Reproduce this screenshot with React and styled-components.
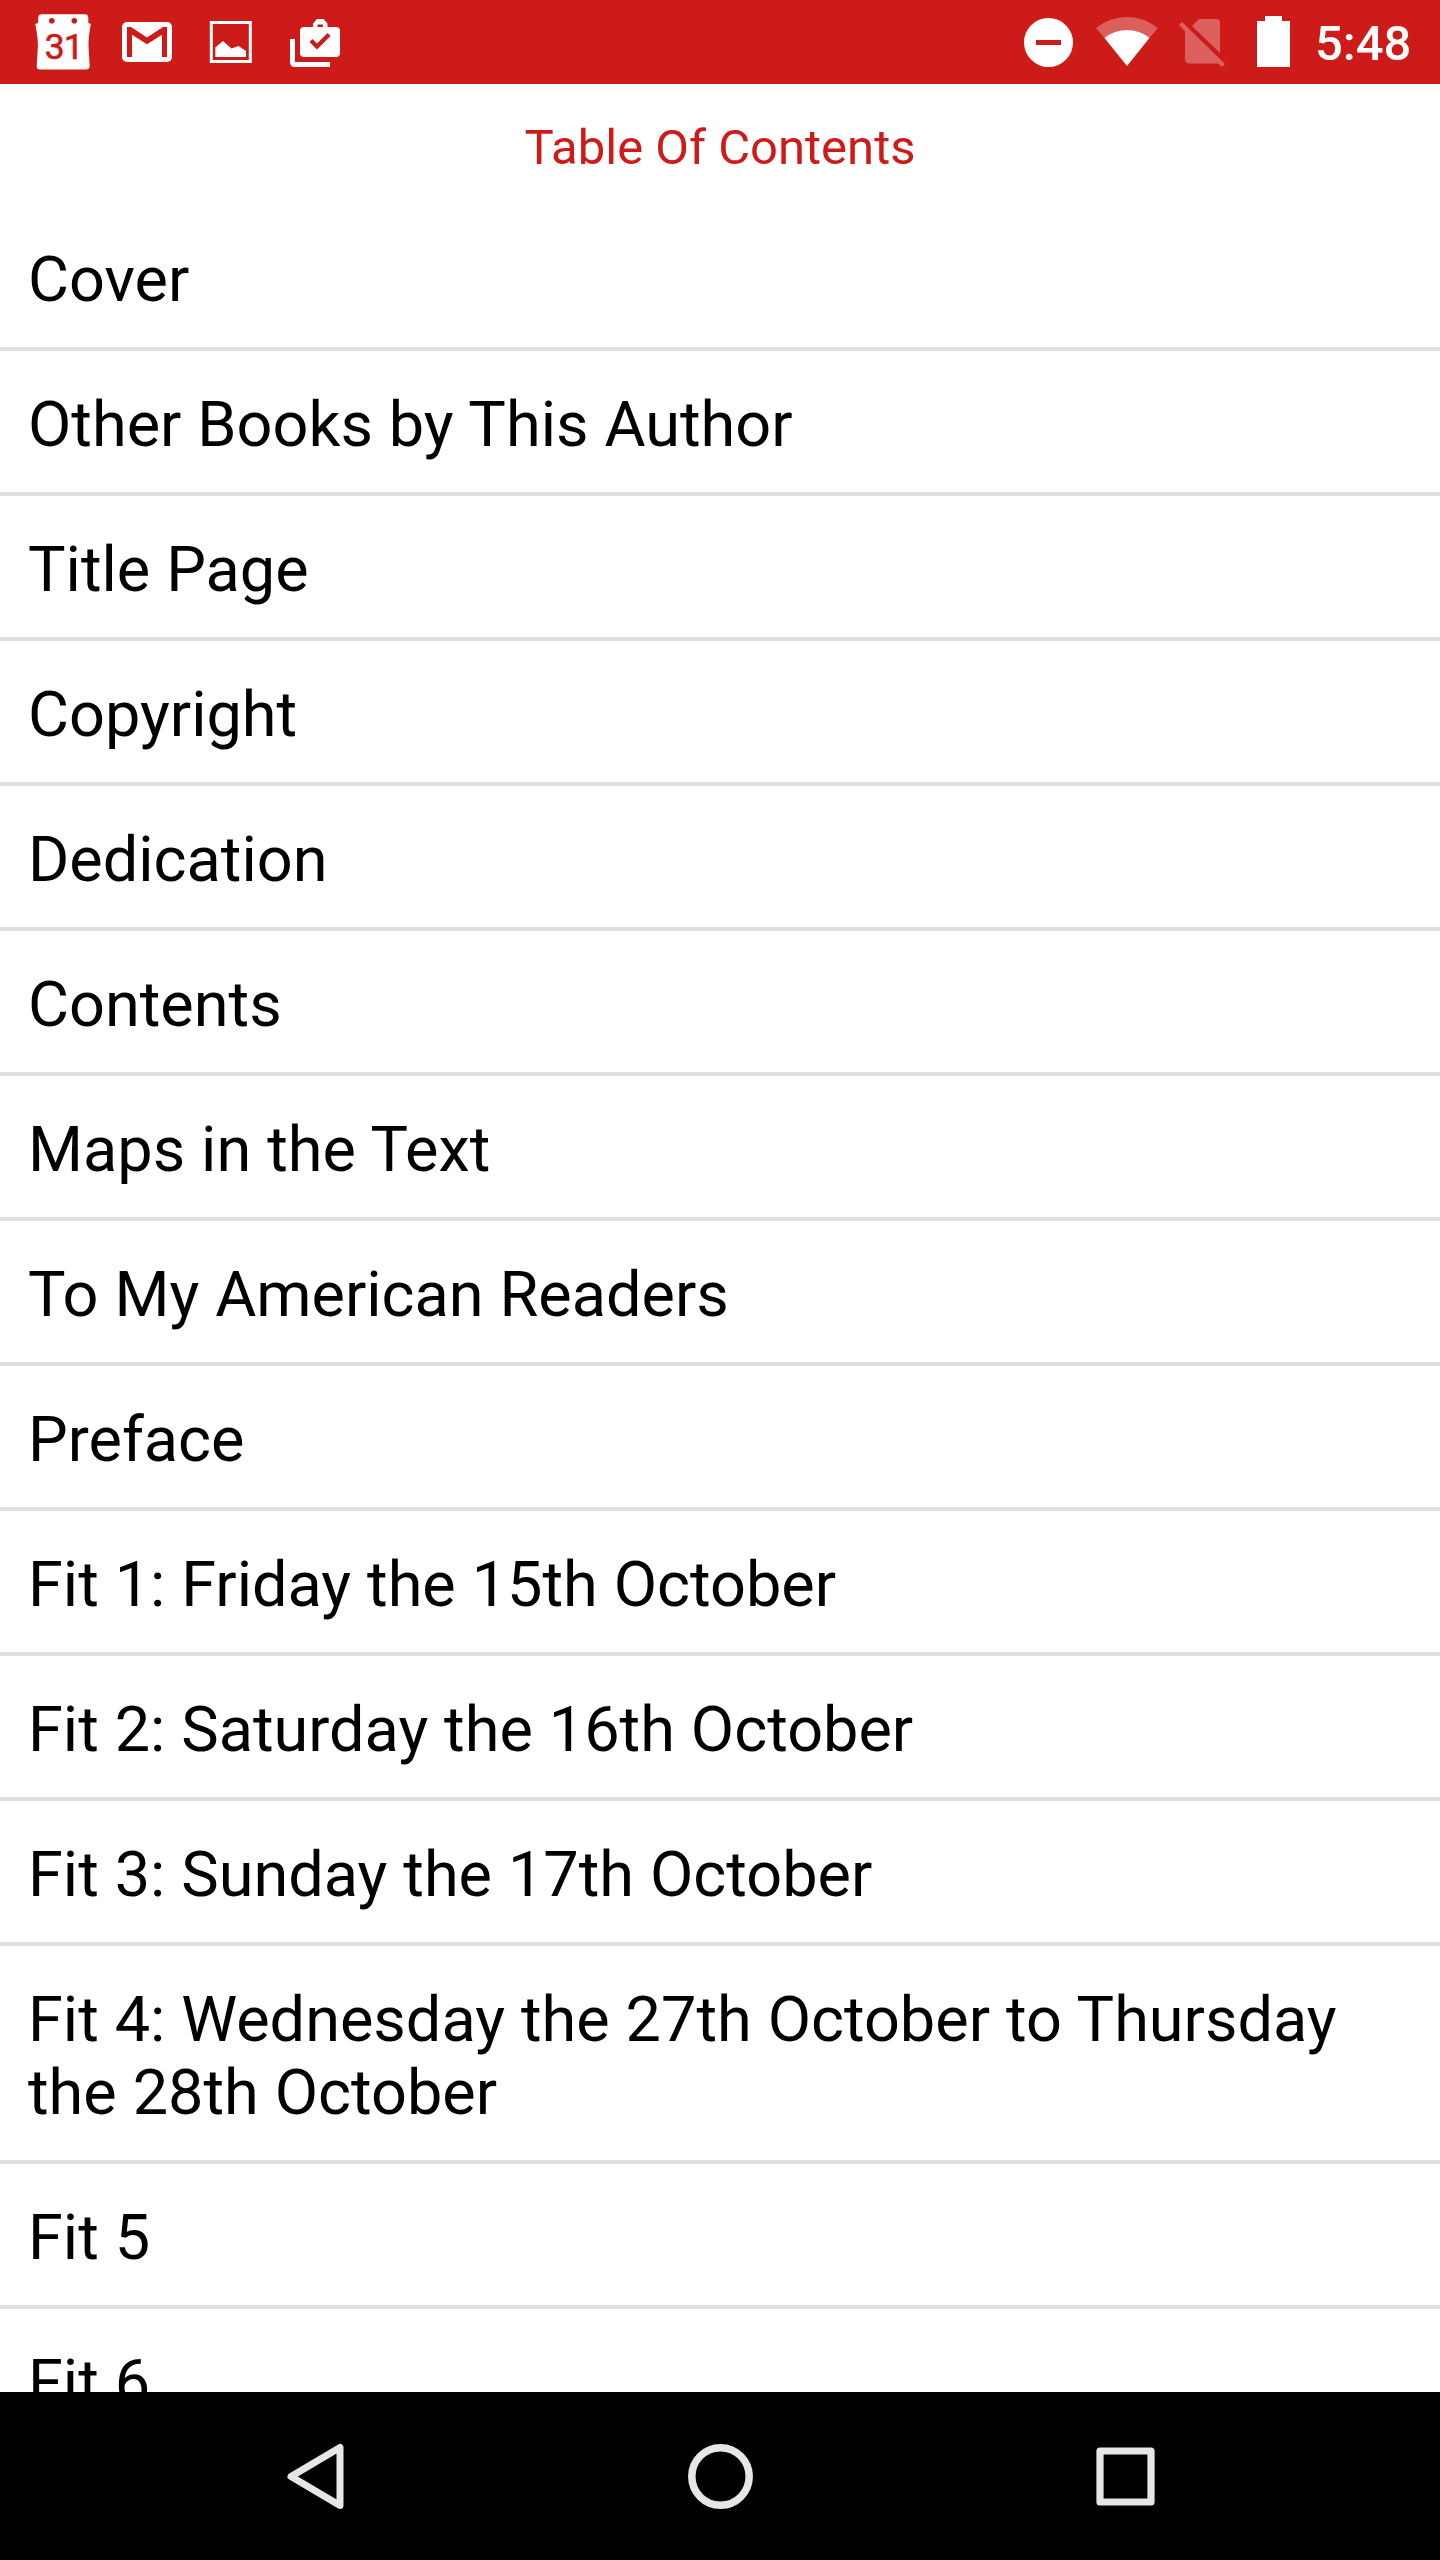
import React from "react";
import styled, { createGlobalStyle } from "styled-components";

const RED = "#cc1b18";

const GlobalStyle = createGlobalStyle`
  body { margin: 0; background: #fff; }
  * { box-sizing: border-box; }
`;

const Screen = styled.div`
  display: flex;
  flex-direction: column;
  width: 1440px;
  height: 2560px;
  overflow: hidden;
  background: #fff;
  font-family: Roboto, "Liberation Sans", sans-serif;
`;

const StatusBar = styled.header`
  display: flex;
  justify-content: space-between;
  flex: none;
  height: 84px;
  padding: 0 30px 0 32px;
  background: ${RED};
  color: #fff;
`;

const IconGroup = styled.div`
  display: flex;
  align-items: center;
`;

const Icon = styled.svg`
  display: block;
  flex: none;
  margin-right: ${(p) => p.$after || 0}px;
`;

const Clock = styled.span`
  width: 95px;
  padding-top: 4px;
  font-size: 49px;
  font-weight: 500;
  line-height: 84px;
  white-space: nowrap;
`;

const Title = styled.h1`
  flex: none;
  height: 122px;
  margin: 0;
  padding-top: 35px;
  font-size: 49px;
  font-weight: 400;
  line-height: 58px;
  text-align: center;
  color: ${RED};
`;

const Chapters = styled.ul`
  flex: 1;
  min-height: 0;
  margin: 0;
  padding: 0;
  overflow: hidden;
  list-style: none;
`;

const Chapter = styled.li`
  padding: 37px 28px 31px;
  border-bottom: 4px solid #e0e0e0;
  font-size: 63px;
  line-height: 73px;
  word-spacing: 0.3px;
  color: #000;
`;

const NavBar = styled.nav`
  display: flex;
  justify-content: center;
  align-items: center;
  gap: 325px;
  flex: none;
  height: 168px;
  background: #000;
`;

const NavButton = styled.button`
  display: flex;
  padding: 0;
  border: 0;
  background: none;
`;

const chapters = [
  "Cover",
  "Other Books by This Author",
  "Title Page",
  "Copyright",
  "Dedication",
  "Contents",
  "Maps in the Text",
  "To My American Readers",
  "Preface",
  "Fit 1: Friday the 15th October",
  "Fit 2: Saturday the 16th October",
  "Fit 3: Sunday the 17th October",
  "Fit 4: Wednesday the 27th October to Thursday the 28th October",
  "Fit 5",
  "Fit 6",
];

// Status icons share the bar's full height, so their paths use bar coordinates.
const StatusIcon = ({ x, width, after, children }) => (
  <Icon $after={after} width={width} height="84" viewBox={`${x} 0 ${width} 84`} fill="#fff">
    {children}
  </Icon>
);

const CalendarIcon = () => (
  <StatusIcon x={32} width={62} after={28}>
    <path d="M41.5 14.3H85Q88.3 14.3 88.3 18V22.8L90.8 24Q88.2 38 88.5 46L89.7 66Q89.7 69.6 86 69.6H40Q36.7 69.6 36.7 66L37.9 46Q38 38 35.3 24L38.2 22.8V18Q38.2 14.3 41.5 14.3Z" />
    <circle cx="51.8" cy="20.8" r="2.8" fill={RED} />
    <circle cx="74.3" cy="20.8" r="2.8" fill={RED} />
    <text x="44.8" y="58.7" fontSize="35.5" fontWeight="400" letterSpacing="-1" fill={RED} stroke={RED} strokeWidth="0.6">31</text>
  </StatusIcon>
);

const MailIcon = () => (
  <StatusIcon x={122} width={50} after={37}>
    <rect x="122" y="22" width="50" height="40" rx="5" />
    <path fill={RED} d="M127 27H131L147 37.5L163 27H167V57H162V34.7L147 44.3L132 34.7V57H127Z" />
  </StatusIcon>
);

const PictureIcon = () => (
  <StatusIcon x={209} width={44} after={37}>
    <path fillRule="evenodd" d="M209.8 21H251.8V63H209.8ZM212.8 24V60H248.8V24Z" />
    <path d="M215.3 57V47.5L223 41L231.5 48.5L238.5 46L246 51V57Z" />
  </StatusIcon>
);

const BagIcon = () => (
  <StatusIcon x={290} width={50}>
    <path fillRule="evenodd" d="M313 27V23.5L317 19H323.5L327.5 23.5V27H336Q340 27 340 31V53Q340 57 336 57H304Q300 57 300 53V31Q300 27 304 27ZM317.5 27H323V24.5H317.5ZM309.5 42L317 49.5L330.5 36L327.5 33L317 43.5L312.5 39Z" />
    <path d="M290 39H295V62H330V67H295Q290 67 290 62Z" />
  </StatusIcon>
);

const DoNotDisturbIcon = () => (
  <StatusIcon x={1024} width={49} after={22}>
    <circle cx="1048.5" cy="42.5" r="24.5" />
    <rect x="1036" y="40" width="25" height="5" fill={RED} />
  </StatusIcon>
);

const WifiIcon = () => (
  <StatusIcon x={1095} width={64} after={19}>
    <path opacity=".3" d="M1104.5 38L1096 28Q1110 17 1127 17Q1144 17 1158 28L1149.5 38Q1140 30 1127 30Q1114 30 1104.5 38Z" />
    <path d="M1127 66L1104.5 38Q1114 30 1127 30Q1140 30 1149.5 38Z" />
  </StatusIcon>
);

const NoSimIcon = () => (
  <StatusIcon x={1178} width={48} after={31}>
    <g opacity=".3">
      <path d="M1192 26L1199 19H1216Q1220 19 1220 23V53Z" />
      <path d="M1179 25L1182 22L1225 64L1222 67L1218 63.5H1190Q1185 63.5 1185 59V31Z" />
    </g>
  </StatusIcon>
);

const BatteryIcon = () => (
  <StatusIcon x={1257} width={33} after={25}>
    <path d="M1257 21H1265V16H1282V21H1290V67H1257Z" />
  </StatusIcon>
);

const App = () => (
  <Screen>
    <GlobalStyle />
    <StatusBar>
      <IconGroup>
        <CalendarIcon />
        <MailIcon />
        <PictureIcon />
        <BagIcon />
      </IconGroup>
      <IconGroup>
        <DoNotDisturbIcon />
        <WifiIcon />
        <NoSimIcon />
        <BatteryIcon />
        <Clock>5:48</Clock>
      </IconGroup>
    </StatusBar>
    <Title>Table Of Contents</Title>
    <Chapters>
      {chapters.map((name) => (
        <Chapter key={name}>{name}</Chapter>
      ))}
    </Chapters>
    <NavBar>
      <NavButton aria-label="Back">
        <Icon width="80" height="80" viewBox="275 2436 80 80" fill="none" stroke="#e6e6e6" strokeWidth="7" strokeLinejoin="round">
          <path d="M291 2476.5L340 2447.5V2505.5Z" />
        </Icon>
      </NavButton>
      <NavButton aria-label="Home">
        <Icon width="80" height="80" viewBox="680 2436 80 80" fill="none" stroke="#e6e6e6" strokeWidth="7.5">
          <circle cx="720.5" cy="2476.5" r="28.7" />
        </Icon>
      </NavButton>
      <NavButton aria-label="Recent apps">
        <Icon width="80" height="80" viewBox="1085 2436 80 80" fill="none" stroke="#e6e6e6" strokeWidth="7.2" strokeLinejoin="round">
          <rect x="1100" y="2451" width="51" height="51" />
        </Icon>
      </NavButton>
    </NavBar>
  </Screen>
);

export default App;
